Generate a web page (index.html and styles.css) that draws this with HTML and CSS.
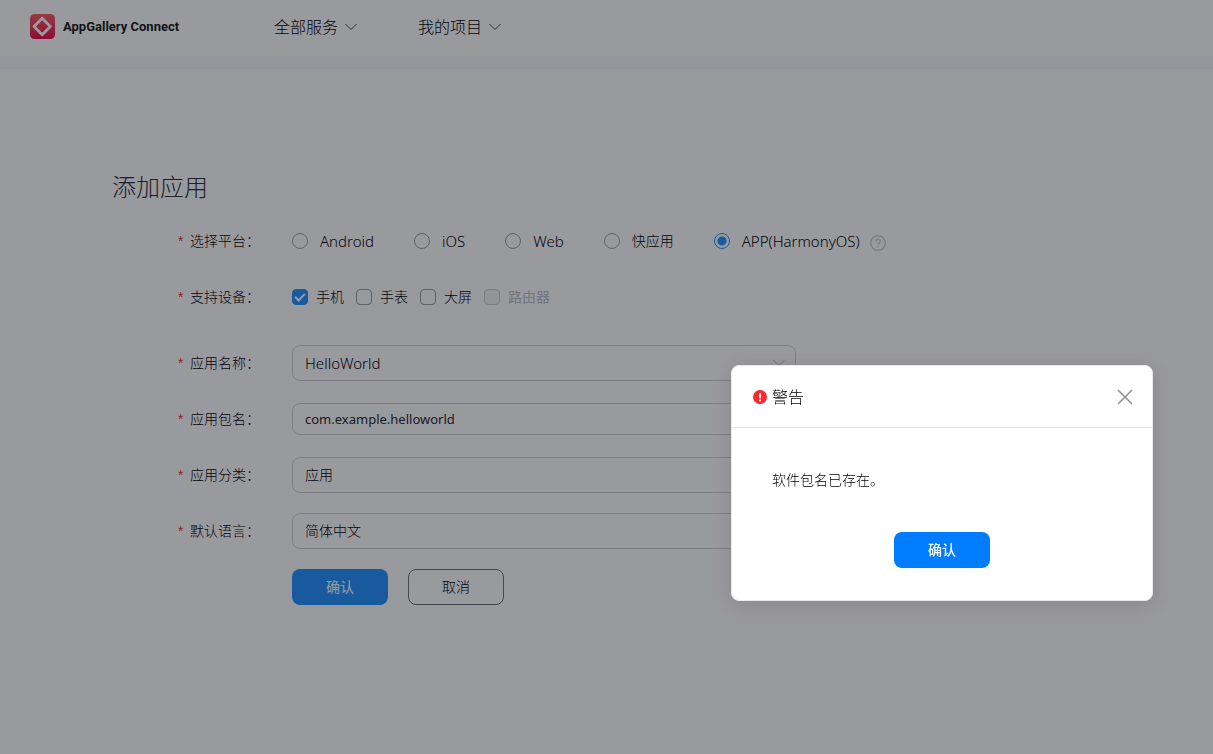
FILE: index.html
```html
<!DOCTYPE html>
<html lang="zh-CN">
<head>
<meta charset="utf-8">
<meta name="viewport" content="width=device-width, initial-scale=1">
<title>AppGallery Connect</title>
<link rel="stylesheet" href="styles.css">
</head>
<body>
<header class="topbar">
  <a class="brand" href="#">
    <svg class="brand-logo" viewBox="0 0 26 26" aria-hidden="true">
      <defs><linearGradient id="logo" x1="0" y1="0" x2="0" y2="1"><stop offset="0" stop-color="#f8646a"/><stop offset="1" stop-color="#f0124c"/></linearGradient></defs>
      <rect x="1" y="0" width="25" height="25" rx="4.5" fill="url(#logo)"/>
      <path d="M13.2 4.3 L21.4 12.5 L13.2 20.7 L5 12.5 Z" fill="none" stroke="#fff" stroke-width="2.8" stroke-linejoin="round"/>
    </svg>
    <span>AppGallery Connect</span>
  </a>
  <nav class="menu">
    <button class="menu-item" type="button">全部服务
      <svg class="chevron" viewBox="0 0 12 8" aria-hidden="true"><path d="M0.5 1 L6 6.5 L11.5 1"/></svg>
    </button>
    <button class="menu-item" type="button">我的项目
      <svg class="chevron" viewBox="0 0 12 8" aria-hidden="true"><path d="M0.5 1 L6 6.5 L11.5 1"/></svg>
    </button>
  </nav>
</header>

<main class="page">
  <h1 class="title">添加应用</h1>
  <form class="form">
    <div class="row" role="radiogroup" aria-labelledby="platform">
      <span class="label" id="platform">选择平台：</span>
      <div class="radios">
        <label class="radio latin"><input type="radio" name="platform">Android</label>
        <label class="radio latin"><input type="radio" name="platform">iOS</label>
        <label class="radio latin"><input type="radio" name="platform">Web</label>
        <label class="radio"><input type="radio" name="platform">快应用</label>
        <div class="with-help">
          <label class="radio latin"><input type="radio" name="platform" checked>APP(HarmonyOS)</label>
          <svg class="help" viewBox="0 0 16 16" aria-hidden="true"><circle cx="8" cy="8" r="7.3"/><path d="M5.9 6.4 C5.9 3.6 10.2 3.7 10.2 6.2 C10.2 7.8 8 7.9 8 9.6 M8 11 V12.3"/></svg>
        </div>
      </div>
    </div>
    <div class="row" role="group" aria-labelledby="devices">
      <span class="label" id="devices">支持设备：</span>
      <div class="checks">
        <label class="check"><input type="checkbox" checked>手机</label>
        <label class="check"><input type="checkbox">手表</label>
        <label class="check"><input type="checkbox">大屏</label>
        <label class="check check-off"><input type="checkbox" disabled>路由器</label>
      </div>
    </div>
    <div class="row row-first-field">
      <label class="label" for="name">应用名称：</label>
      <div class="select">
        <select id="name" class="latin"><option>HelloWorld</option></select>
        <svg class="chevron" viewBox="0 0 12 8" aria-hidden="true"><path d="M0.5 1 L6 6.5 L11.5 1"/></svg>
      </div>
    </div>
    <div class="row">
      <label class="label" for="package">应用包名：</label>
      <input class="text" id="package" type="text" value="com.example.helloworld">
    </div>
    <div class="row">
      <label class="label" for="category">应用分类：</label>
      <div class="select">
        <select id="category"><option>应用</option></select>
        <svg class="chevron" viewBox="0 0 12 8" aria-hidden="true"><path d="M0.5 1 L6 6.5 L11.5 1"/></svg>
      </div>
    </div>
    <div class="row">
      <label class="label" for="language">默认语言：</label>
      <div class="select">
        <select id="language"><option>简体中文</option></select>
        <svg class="chevron" viewBox="0 0 12 8" aria-hidden="true"><path d="M0.5 1 L6 6.5 L11.5 1"/></svg>
      </div>
    </div>
    <div class="actions">
      <button class="btn btn-submit" type="button">确认</button>
      <button class="btn btn-plain" type="button">取消</button>
    </div>
  </form>
</main>

<div class="backdrop"></div>
<section class="dialog" role="alertdialog" aria-modal="true" aria-labelledby="dialog-title" aria-describedby="dialog-text">
  <div class="dialog-head">
    <svg class="alert" viewBox="0 0 14 14" aria-hidden="true"><circle cx="7" cy="7" r="7" fill="#fc2a30"/><path d="M7 3 V8.2 M7 9.6 V11.2" stroke="#fff" stroke-width="1.8"/></svg>
    <h2 class="dialog-title" id="dialog-title">警告</h2>
    <button class="close" type="button" aria-label="关闭">
      <svg viewBox="0 0 16 16" aria-hidden="true"><path d="M1 1 L15 15 M15 1 L1 15"/></svg>
    </button>
  </div>
  <div class="dialog-body">
    <p class="dialog-text" id="dialog-text">软件包名已存在。</p>
    <button class="btn btn-primary" type="button">确认</button>
  </div>
</section>
</body>
</html>
```

FILE: styles.css
```css
* { box-sizing: border-box; }

body {
  margin: 0;
  min-height: 100vh;
  background: #fff;
  color: #08090c;
  font: 300 14px/20px "Noto Sans", "Noto Sans CJK SC", sans-serif;
}

button, input, select { font: inherit; color: inherit; }

button { padding: 0; border: 0; background: none; cursor: pointer; }

.topbar {
  display: flex;
  align-items: center;
  padding: 14px 29px 16px;
  border-bottom: 13px solid #f9f9fa;
}

.brand {
  display: flex;
  align-items: center;
  gap: 8px;
  width: 245px;
  color: #1d1e22;
  font: 700 13px/20px Roboto, sans-serif;
  text-decoration: none;
}

.brand-logo { width: 26px; height: 26px; }

.menu { display: flex; gap: 61px; }

.menu-item {
  display: flex;
  align-items: center;
  gap: 7px;
  font-size: 16px;
  line-height: 24px;
}

.chevron {
  width: 12px;
  height: 8px;
  fill: none;
  stroke: #55565c;
}

.page { padding: 100px 112px 40px; }

.title {
  margin: 0 0 18px;
  color: #33343c;
  font-size: 24px;
  font-weight: 300;
  line-height: 36px;
}

.form { display: flex; flex-direction: column; gap: 20px; }

.row { display: flex; align-items: center; gap: 32px; min-height: 36px; }

.row-first-field { margin-top: 10px; }

.label {
  display: flex;
  flex: none;
  justify-content: flex-end;
  width: 148px;
}

.label::before {
  content: "*";
  margin-right: 5px;
  padding-top: 4px;
  color: #e8383e;
  font: 400 14px/16px "Liberation Mono", monospace;
}

.radios { display: flex; flex-wrap: wrap; gap: 12px 40px; }

.radio { display: flex; align-items: center; gap: 12px; }

.latin { font-size: 15px; }

.with-help { display: flex; align-items: flex-end; gap: 10px; }

.help { width: 16px; height: 16px; fill: none; stroke: #d3d3d6; stroke-width: 1.4; }

.checks { display: flex; flex-wrap: wrap; gap: 12px; }

.check { display: flex; align-items: center; gap: 8px; }

.check-off { color: #c0c2cb; font-weight: 400; }

.radio input, .check input {
  appearance: none;
  width: 16px;
  height: 16px;
  margin: 0;
  border: 1px solid #a0a1a7;
  border-radius: 50%;
}

.radio input:checked {
  border-color: #2a95ff;
  background: radial-gradient(circle, #2a95ff 4px, transparent 5px);
}

.check input { display: grid; place-items: center; border-radius: 4px; }

.check input:checked { border-color: #2a95ff; background: #2a95ff; }

.check input:checked::before {
  content: "";
  box-sizing: border-box;
  width: 10px;
  height: 6px;
  border: solid #fff;
  border-width: 0 0 2px 2px;
  transform: translateY(-1px) rotate(-45deg);
}

.check input:disabled { border-color: #cfcfd2; background: #f5f5f6; }

.select { display: grid; align-items: center; flex: 0 1 504px; }

.select select, .select .chevron { grid-area: 1 / 1; }

.select .chevron { justify-self: end; margin-right: 11px; stroke: #b9babf; pointer-events: none; }

.select select, .text {
  appearance: none;
  width: 100%;
  height: 36px;
  padding: 0 12px;
  border: 1px solid #d3d3d6;
  border-radius: 8px;
  background: transparent;
}

.text { flex: 0 1 504px; height: 32px; color: #2c2d32; font-size: 13px; font-weight: 400; }

.actions { display: flex; gap: 20px; padding-left: 180px; }

.btn { width: 96px; height: 36px; border-radius: 8px; }

.btn-submit { background: #2a95ff; color: #fff; font-weight: 400; }

.btn-plain { border: 1px solid #77787d; }

.btn-primary { background: #007dff; color: #fff; font-weight: 500; }

.backdrop { position: fixed; inset: 0; background: rgba(0, 3, 13, 0.4); }

.dialog {
  position: fixed;
  top: 365px;
  right: 60px;
  width: 422px;
  border: 1px solid #e8e9ef;
  border-radius: 8px;
  background: #fff;
  color: #000;
  box-shadow: 0 4px 20px rgba(0, 0, 0, 0.12);
}

.dialog-head {
  display: flex;
  align-items: center;
  gap: 5px;
  height: 62px;
  padding: 0 19px 0 21px;
  border-bottom: 1px solid #e2e3e5;
}

.alert { width: 14px; height: 14px; }

.dialog-title { margin: 0; font-size: 16px; font-weight: 300; line-height: 24px; }

.close { display: flex; margin-left: auto; }

.close svg { width: 16px; height: 16px; fill: none; stroke: #8e8f94; stroke-width: 1.5; }

.dialog-body {
  display: flex;
  flex-direction: column;
  align-items: center;
  gap: 42px;
  padding: 42px 40px 32px;
}

.dialog-text { align-self: stretch; margin: 0; }
```
